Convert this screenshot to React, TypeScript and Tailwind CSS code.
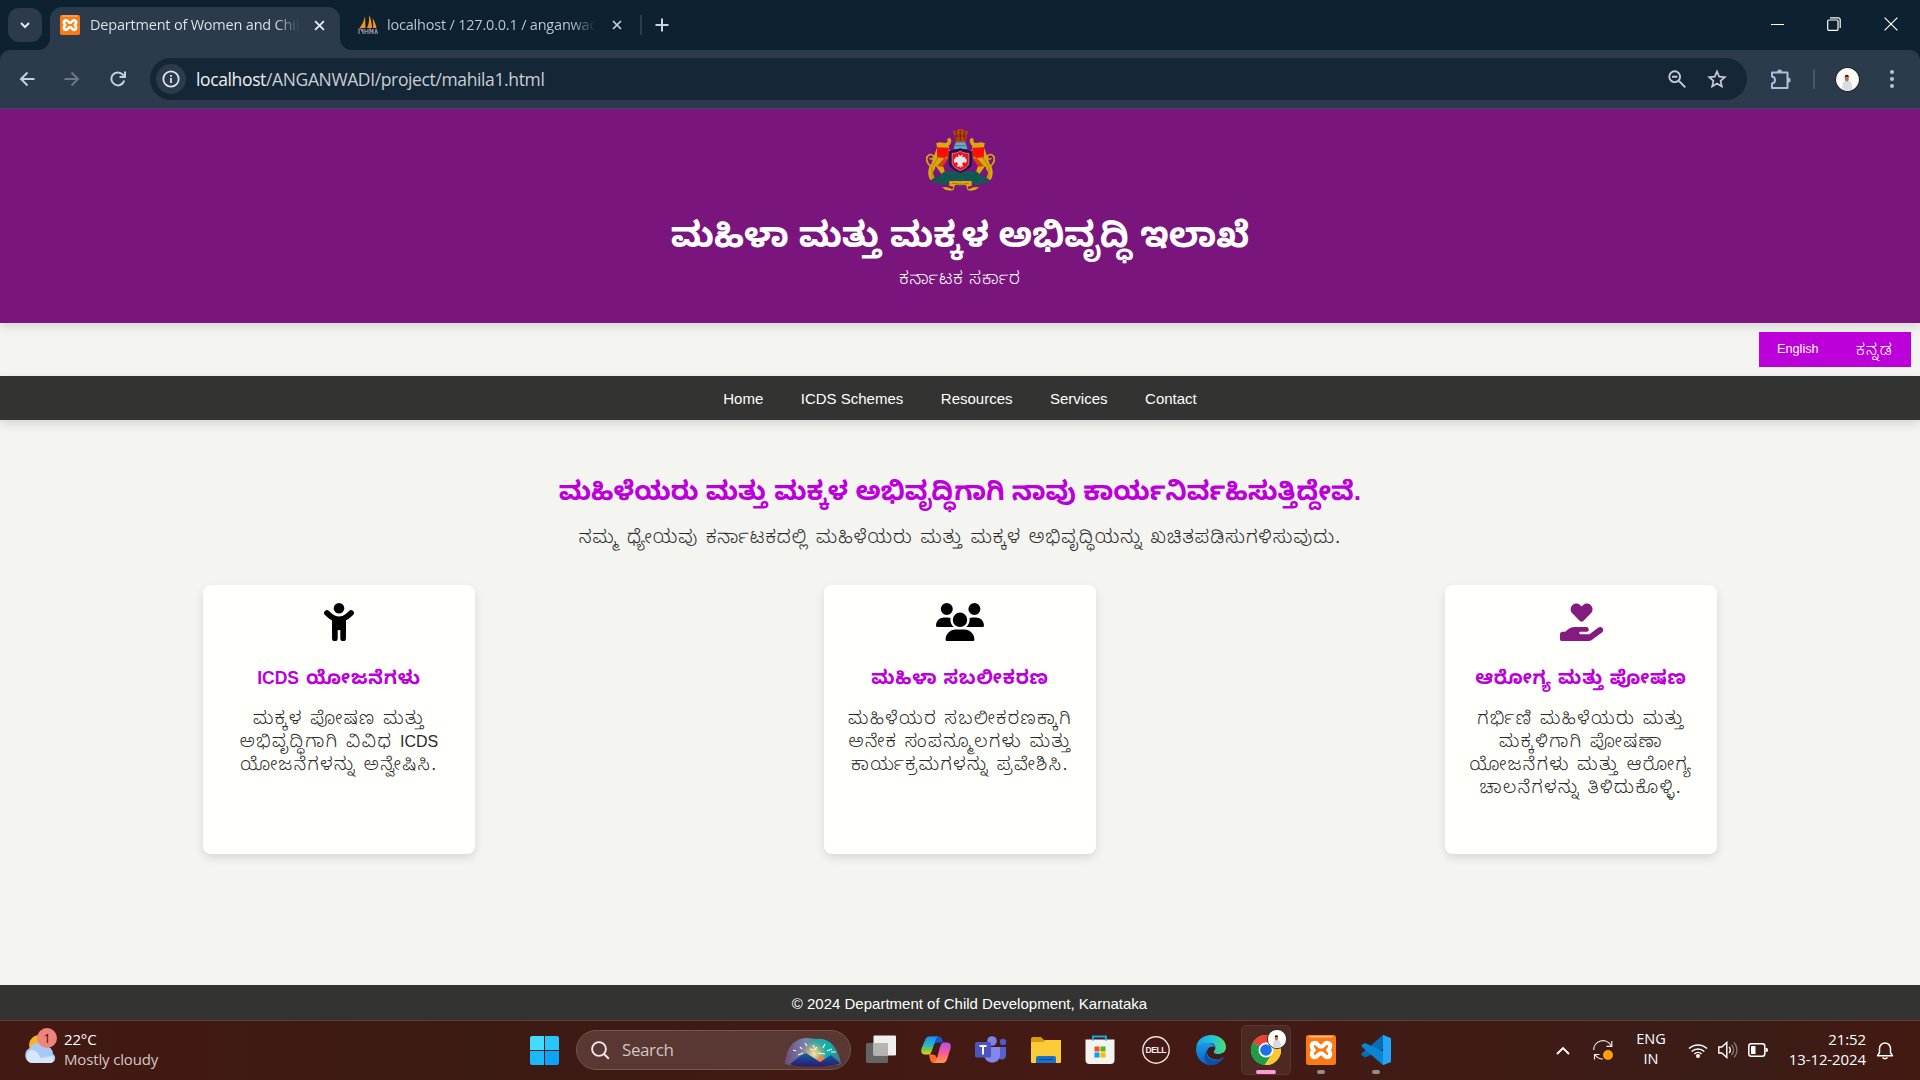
import React from "react";
import { FaUsers, FaHandHoldingHeart } from "react-icons/fa6";

const ui = "font-['Open_Sans','Noto_Sans',sans-serif]";

function Xampp({ className }: { className: string }) {
  return (
    <svg viewBox="0 0 30 30" className={className}>
      <rect width="30" height="30" rx="2.5" fill="#fb7a12" />
      <rect x="3" y="0.8" width="24" height="1.6" rx="0.8" fill="#ffb884" />
      <path
        d="M15 11.600c-1.800 0-2.400-.8-3.400-2.200C9.800 7 5.800 7.600 5.800 11c0 2 .8 3 2 4-1.200 1-2 2-2 4 0 3.400 4 4 5.800 1.600 1-1.400 1.600-2.200 3.400-2.200s2.400.8 3.400 2.200C20.200 23 24.200 22.400 24.200 19c0-2-.8-3-2-4 1.200-1 2-2 2-4 0-3.400-4-4-5.800-1.600-1 1.400-1.600 2.200-3.400 2.200z"
        fill="none"
        stroke="#fff"
        strokeWidth="4.200"
        strokeLinejoin="round"
      />
    </svg>
  );
}

function Sails() {
  return (
    <svg viewBox="0 0 20 20" className="h-5 w-5 shrink-0">
      <path d="M7 1 7.500 13H1.500C4 10 6 6 7 1zM11 0c.4 5 0 9-2 13h5C14 8 13 4 11 0zM14.500 3c2 3 3.500 7 4 10h-3.500c.3-3 .2-7-.5-10z" fill="#f7941d" />
      <path d="M1 19v-5h2l1 2 1-2v5M7 14v5M7 16.500h3M10 14v5M12 19v-5l2 3 1-3v5M17 19l1-5 1.500 5" fill="none" stroke="#8d8aa8" strokeWidth="1.200" />
    </svg>
  );
}

function Avatar({ className }: { className: string }) {
  return (
    <svg viewBox="0 0 24 24" className={className}>
      <circle cx="12" cy="12" r="11.500" fill="#fdfdfa" stroke="#1b1b1d" strokeWidth="1" />
      <path d="M7 21c0-6 1-8 4.500-8s5 2 5 8c-2 2-7.500 2-9.500 0z" fill="#d8dce6" />
      <ellipse cx="11.300" cy="11" rx="1.900" ry="2.800" fill="#c9713f" />
      <path d="M9.300 9.800c0-3 4-3 4 0-1-.8-3-.8-4 0z" fill="#1f1512" />
    </svg>
  );
}

function CloseX({ className }: { className: string }) {
  return (
    <svg viewBox="0 0 10 10" className={className}>
      <path d="M1 1l8 8M9 1l-8 8" fill="none" stroke="currentColor" strokeWidth="1.700" />
    </svg>
  );
}

function TabStrip() {
  return (
    <div className="flex h-[50px] items-start bg-[#0e2130]">
      <div className="ml-2 mt-2 flex h-[34px] w-[34px] items-center justify-center rounded-[11px] bg-[#2b3b4b]">
        <svg viewBox="0 0 12 12" className="h-3 w-3">
          <path d="M2 4l4 4 4-4" fill="none" stroke="#e3e8ee" strokeWidth="2" />
        </svg>
      </div>
      <svg viewBox="0 0 12 12" className="mt-[38px] -ml-1 h-3 w-3 shrink-0">
        <path d="M12 0v12H0A12 12 0 0 0 12 0z" fill="#2b3b4b" />
      </svg>
      <div className="mt-[7px] flex h-[43px] w-[290px] shrink-0 items-center rounded-t-[12px] bg-[#2b3b4b] pb-[7px]">
        <Xampp className="ml-[10px] h-5 w-5 shrink-0" />
        <span className="ml-[10px] w-[210px] whitespace-nowrap bg-gradient-to-r from-[#e4e9ee] from-88% to-transparent bg-clip-text text-[14.5px] tracking-[-0.2px] text-transparent">
          Department of Women and Chil
        </span>
        <CloseX className="ml-[14px] h-[11px] w-[11px] text-[#e4e9ee]" />
      </div>
      <svg viewBox="0 0 12 12" className="mt-[38px] h-3 w-3 shrink-0">
        <path d="M0 0v12h12A12 12 0 0 1 0 0z" fill="#2b3b4b" />
      </svg>
      <div className="mt-[7px] flex h-9 items-center">
        <div className="ml-[6px] flex items-center">
          <Sails />
          <span className="ml-[9px] w-[209px] whitespace-nowrap bg-gradient-to-r from-[#c2ccd8] from-88% to-transparent bg-clip-text text-[14.5px] tracking-[-0.2px] text-transparent">
            localhost / 127.0.0.1 / anganwad
          </span>
          <CloseX className="ml-[16px] h-[10px] w-[10px] text-[#c6d2e0]" />
        </div>
        <div className="ml-[18px] h-5 w-[2px] bg-[#2b3b4b]" />
        <svg viewBox="0 0 14 14" className="ml-[13px] h-[14px] w-[14px]">
          <path d="M7 0.500v13M0.500 7h13" stroke="#cbd5e1" strokeWidth="2" />
        </svg>
      </div>
      <div className="ml-auto mt-[17px] mr-[22px] flex items-center gap-[43px] text-white">
        <div className="h-px w-[13px] bg-white" />
        <svg viewBox="0 0 14 14" className="h-[14px] w-[14px]">
          <rect x="0.700" y="3" width="10.300" height="10.300" rx="1" fill="none" stroke="#fff" strokeWidth="1.200" />
          <path d="M3 .9h8.200a2 2 0 0 1 2 2V11" fill="none" stroke="#fff" strokeWidth="1.200" />
        </svg>
        <svg viewBox="0 0 14 14" className="h-[14px] w-[14px]">
          <path d="M.6.6l12.800 12.800M13.400.6.6 13.400" stroke="#fff" strokeWidth="1.200" />
        </svg>
      </div>
    </div>
  );
}

function Toolbar() {
  return (
    <div className="bg-[#0e2130]">
      <div className="flex h-[59px] items-center rounded-t-[10px] border-b border-[#46495a] bg-[#2b3b4b]">
        <svg viewBox="0 0 16 16" className="ml-[19px] h-4 w-4">
          <path d="M15.500 8H2M8.500 1.500 2 8l6.500 6.500" fill="none" stroke="#c3d0e2" strokeWidth="2" />
        </svg>
        <svg viewBox="0 0 16 16" className="ml-[29px] h-4 w-4">
          <path d="M.5 8H14M7.500 1.500 14 8l-6.500 6.500" fill="none" stroke="#6c7885" strokeWidth="2" />
        </svg>
        <svg viewBox="0 0 16 16" className="ml-[30px] h-4 w-4">
          <path d="M14.200 9.500A6.500 6.500 0 1 1 12.800 3.600l1.700 1.800M15 .5V6H9.500" fill="none" stroke="#c3d0e2" strokeWidth="2" />
        </svg>
        <div className="ml-[24px] flex h-[42px] w-[1597px] items-center rounded-full bg-[#152736]">
          <div className="ml-[6px] flex h-[30px] w-[30px] items-center justify-center rounded-full bg-[#2b3b4b]">
            <svg viewBox="0 0 18 18" className="h-[18px] w-[18px]">
              <circle cx="9" cy="9" r="7.700" fill="none" stroke="#e1e3ea" strokeWidth="1.800" />
              <path d="M9 8v5M9 5v1.800" stroke="#e1e3ea" strokeWidth="1.800" />
            </svg>
          </div>
          <span className="ml-[10px] whitespace-nowrap text-[17.5px] tracking-[-0.37px] text-[#c9ced6]">
            <span className="text-[#eef1f4]">localhost</span>/ANGANWADI/project/mahila1.html
          </span>
          <svg viewBox="0 0 18 18" className="ml-auto h-[18px] w-[18px]">
            <circle cx="6.700" cy="6.700" r="5.400" fill="none" stroke="#c7cad3" strokeWidth="1.900" />
            <path d="M11 11l6.300 6.300M4 6.700h5.400" stroke="#c7cad3" strokeWidth="1.900" />
          </svg>
          <svg viewBox="0 0 20 20" className="ml-[21px] mr-5 h-5 w-5">
            <path d="M10 2.500l2.200 5.200 5.600.5-4.200 3.700 1.200 5.500L10 14.500l-4.800 2.900 1.200-5.500L2.200 8.200l5.600-.5z" fill="none" stroke="#c7cad3" strokeWidth="1.700" />
          </svg>
        </div>
        <svg viewBox="0 0 22 22" className="ml-[23px] h-[22px] w-[22px]">
          <path d="M2 4.500h15.500V20H2v-4.500c4-.5 4-6.500 0-7z" fill="none" stroke="#a9bfdf" strokeWidth="2" strokeLinejoin="round" />
          <path d="M7 4a2.600 2.600 0 0 1 5.200 0zM18 9.500a2.600 2.600 0 0 1 0 5.200z" fill="#a9bfdf" />
        </svg>
        <div className="ml-[21px] h-5 w-[2px] bg-[#45566a]" />
        <Avatar className="ml-5 h-[25px] w-[25px]" />
        <div className="ml-[30px] flex flex-col gap-[3px]">
          <i className="h-1 w-1 rounded-full bg-[#b4c6df]" />
          <i className="h-1 w-1 rounded-full bg-[#b4c6df]" />
          <i className="h-1 w-1 rounded-full bg-[#b4c6df]" />
        </div>
      </div>
    </div>
  );
}

function EmblemSide() {
  return (
    <g>
      <path d="M722 178C704 165 698 146 706 137c7-7 16-1 13 7-2 5-8 4-8 0" fill="none" stroke="#d9a80a" strokeWidth="4.500" />
      <path d="M728 112l-2-12 8-3 14 2c6-1 7-6 5-12l6-4 4 6c0 9-3 14-6 18v10l8 12 4 20-8-2-6-16-2 17-12 14 6 22-8 8-14-24-7 20 4 18-10 4c-8-14-7-36 2-49z" fill="#d9a80a" />
      <path d="M728 112l28 1 1 10 3 12-14 9-18-2z" fill="#fb0d0a" />
      <path d="M728 168l18-24 9 3-14 24z" fill="#e23a0b" />
      <path d="M731 142l-14 26M742 150l-10 20M752 122l8 30M716 170v34" stroke="#8e6410" strokeWidth="1.500" fill="none" />
      <path d="M716 206c8-4 14-2 18-8 6-8 16-16 30-14l22 4v25l-24-3-14 16-16-8-14 2z" fill="#0b5f50" />
      <path d="M720 212l14-8 12 10 10-14 14 6 10-12M745 194l14 4 20-8" fill="none" stroke="#3d2a63" strokeWidth="2" strokeDasharray="3 2" />
      <path d="M786 213h-28v14l10 3-2 8-12-6-14-1 8 8 12 3 8-1 4-16 14 1z" fill="#d9a80a" />
    </g>
  );
}

function Emblem() {
  return (
    <svg viewBox="701 57 169 186" preserveAspectRatio="none" className="h-[62px] w-[69px]">
      <EmblemSide />
      <g transform="matrix(-1 0 0 1 1571 0)">
        <EmblemSide />
      </g>
      <path d="M767 62l8 1 5-6h11l5 6 8-1-3 16-4 19h-23l-3-19z" fill="#b8430f" />
      <path d="M775 64v26M785 60v32M795 64v26M771 78h28" stroke="#6f2410" strokeWidth="2.500" />
      <path d="M774 97h23l3 9 2 11h-33l2-11z" fill="#62aebf" />
      <path d="M771 107h29" stroke="#2e6d86" strokeWidth="2" />
      <path d="M757 124l28-9 29 9v36c0 14-16 22-29 29-12-7-28-15-28-29z" fill="#2a0f4c" />
      <path d="M765 130c8 0 14-2 20-7 6 5 13 7 21 7v28c0 10-10 18-21 24-10-6-20-14-20-24z" fill="#f01018" stroke="#f3c9d4" strokeWidth="1.500" />
      <path d="M780 133l5 5 6-5-1 9 5-2 6 10-2 10-7-4-2 7 3 8-7-2-1 6-2-6-7 2 3-8-2-7-6 4-2-10 6-10 5 2z" fill="#e6e6ea" />
      <path d="M766 219q20 7 40 0" fill="none" stroke="#6b4a10" strokeWidth="2.500" strokeDasharray="3 1.500" />
    </svg>
  );
}

function ChildIcon() {
  return (
    <svg viewBox="0 0 90 116" className="h-[38.4px] w-[30px]">
      <circle cx="45" cy="16" r="16" />
      <path d="M8.500 30.500Q20 42 31 47q14 4 28 0 11-5 22.500-16.500" fill="none" stroke="#000" strokeWidth="17" strokeLinecap="round" />
      <path d="M24 46h42v36H24z" />
      <path d="M32.500 60v47M57.500 60v47" stroke="#000" strokeWidth="17" strokeLinecap="round" />
    </svg>
  );
}

const cards = [
  {
    icon: <ChildIcon />,
    title: (
      <>
        <span className="mr-[7px] text-[17.5px] tracking-normal">ICDS</span>ಯೋಜನೆಗಳು
      </>
    ),
    lines: [
      "ಮಕ್ಕಳ ಪೋಷಣ ಮತ್ತು",
      <>
        ಅಭಿವೃದ್ಧಿಗಾಗಿ ವಿವಿಧ <span className="text-[16px] tracking-normal">ICDS</span>
      </>,
      "ಯೋಜನೆಗಳನ್ನು ಅನ್ವೇಷಿಸಿ.",
    ],
  },
  {
    icon: <FaUsers className="h-[38.4px] w-[48px] text-black" />,
    title: "ಮಹಿಳಾ ಸಬಲೀಕರಣ",
    lines: ["ಮಹಿಳೆಯರ ಸಬಲೀಕರಣಕ್ಕಾಗಿ", "ಅನೇಕ ಸಂಪನ್ಮೂಲಗಳು ಮತ್ತು", "ಕಾರ್ಯಕ್ರಮಗಳನ್ನು ಪ್ರವೇಶಿಸಿ."],
  },
  {
    icon: <FaHandHoldingHeart className="ml-[2px] h-[38.4px] w-[43.2px] text-[#851a80]" />,
    title: "ಆರೋಗ್ಯ ಮತ್ತು ಪೋಷಣ",
    lines: ["ಗರ್ಭಿಣಿ ಮಹಿಳೆಯರು ಮತ್ತು", "ಮಕ್ಕಳಿಗಾಗಿ ಪೋಷಣಾ", "ಯೋಜನೆಗಳು ಮತ್ತು ಆರೋಗ್ಯ", "ಚಾಲನೆಗಳನ್ನು ತಿಳಿದುಕೊಳ್ಳಿ."],
  },
];

function Page() {
  return (
    <div className="flex h-[911px] flex-col whitespace-nowrap bg-[#f4f4f0] font-['Liberation_Sans','Noto_Sans_Kannada',Arial,sans-serif]">
      <header className="flex h-[214px] shrink-0 flex-col items-center bg-[#7a157e] pt-5 text-white shadow-[0_4px_10px_rgba(0,0,0,0.12)]">
        <Emblem />
        <h1 className="mt-[23px] flex h-[42px] items-center text-[35.2px] font-bold">ಮಹಿಳಾ ಮತ್ತು ಮಕ್ಕಳ ಅಭಿವೃದ್ಧಿ ಇಲಾಖೆ</h1>
        <p className="mt-[13px] flex h-5 items-center text-[17px] font-light tracking-[1px]">ಕರ್ನಾಟಕ ಸರ್ಕಾರ</p>
      </header>
      <div className="flex h-[53px] shrink-0 justify-end pr-[9px] pt-[9px]">
        <div className="flex h-[35px] w-[152px] items-center justify-between bg-[#bb00d9] pl-[18px] pr-[18px] pt-px text-white">
          <span className="text-[12.7px]">English</span>
          <span className="text-[16px] font-light tracking-[1.3px]">ಕನ್ನಡ</span>
        </div>
      </div>
      <nav className="flex h-11 shrink-0 items-center justify-center gap-[37.5px] bg-[#333331] pt-[3px] text-[15px] text-white shadow-[0_4px_10px_rgba(0,0,0,0.12)]">
        <span>Home</span>
        <span>ICDS Schemes</span>
        <span>Resources</span>
        <span>Services</span>
        <span>Contact</span>
      </nav>
      <main className="flex flex-1 flex-col">
        <h2 className="mt-[56px] flex h-8 items-center justify-center text-[26.35px] font-bold text-[#bb00d9]">
          ಮಹಿಳೆಯರು ಮತ್ತು ಮಕ್ಕಳ ಅಭಿವೃದ್ಧಿಗಾಗಿ ನಾವು ಕಾರ್ಯನಿರ್ವಹಿಸುತ್ತಿದ್ದೇವೆ.
        </h2>
        <p className="mt-[17px] flex h-6 items-center justify-center text-[18.7px] font-light tracking-[1.05px] [word-spacing:1.5px] text-[#2b2b2b]">
          ನಮ್ಮ ಧ್ಯೇಯವು ಕರ್ನಾಟಕದಲ್ಲಿ ಮಹಿಳೆಯರು ಮತ್ತು ಮಕ್ಕಳ ಅಭಿವೃದ್ಧಿಯನ್ನು ಖಚಿತಪಡಿಸುಗಳಿಸುವುದು.
        </p>
        <div className="mt-9 flex justify-between px-[203px]">
          {cards.map((c, i) => (
            <section key={i} className="flex h-[269px] w-[272px] flex-col items-center rounded-[8px] bg-[#fffffc] pt-[18px] shadow-[0_4px_10px_rgba(0,0,0,0.11)]">
              {c.icon}
              <h3 className="mt-[25px] flex h-6 items-center text-[19px] font-bold tracking-[0.8px] text-[#bb00d9]">{c.title}</h3>
              <div className="mt-[17px] text-center text-[18px] font-light leading-[23px] tracking-[1.5px] [word-spacing:1px] text-[#2b2b2b]">
                {c.lines.map((l, j) => (
                  <p key={j} className="h-[23px]">{l}</p>
                ))}
              </div>
            </section>
          ))}
        </div>
      </main>
      <footer className="flex h-[35px] shrink-0 items-center justify-center bg-[#333331] pl-[19px] pt-[3px] text-[15px] text-white">
        © 2024 Department of Child Development, Karnataka
      </footer>
    </div>
  );
}

function WeatherIcon() {
  return (
    <svg viewBox="0 0 36 38" className="h-[38px] w-9">
      <circle cx="17" cy="17" r="10" fill="#f8b322" />
      <path d="M9 35a8 8 0 0 1-1-15 9 9 0 0 1 15-2 8 8 0 0 1 8 8 5 5 0 0 1-2 9z" fill="#a9c9f5" />
      <path d="M9 35a7 7 0 0 1 0-13c5 0 8 3 9 8l13-2a5 5 0 0 1-2 7z" fill="#d6e6fc" />
      <circle cx="25" cy="10" r="10" fill="#f0837c" />
      <text x="25" y="14.500" textAnchor="middle" fontSize="12.500" fill="#2a1210">1</text>
    </svg>
  );
}

function SearchArt() {
  return (
    <svg viewBox="0 0 58 30" className="h-[30px] w-[58px]">
      <defs>
        <linearGradient id="sky" x1="0" x2="1">
          <stop offset="0" stopColor="#6a4f78" />
          <stop offset=".35" stopColor="#7a7fae" />
          <stop offset=".55" stopColor="#2aa7a4" />
          <stop offset=".8" stopColor="#0ab0b0" />
          <stop offset="1" stopColor="#5b6a78" />
        </linearGradient>
        <radialGradient id="glow">
          <stop offset="0" stopColor="#ffe6a0" />
          <stop offset="1" stopColor="#ffb04000" />
        </radialGradient>
        <linearGradient id="hill" x2="0" y2="1">
          <stop offset="0" stopColor="#0d63ad" />
          <stop offset="1" stopColor="#2c1a6c" />
        </linearGradient>
      </defs>
      <path d="M1 27C2 9 12 1 23 1c4 0 6 1 9 1 14-2 23 10 25 25-1 2-54 2-56 0z" fill="url(#sky)" />
      <circle cx="30" cy="17" r="13" fill="url(#glow)" />
      <path d="M30 26l7-8 6 6z" fill="#ff7a45" />
      <path d="M6 27l10-8 6-3 14 9 11-7 9 8c-2 4-46 5-50 1z" fill="url(#hill)" />
      <path d="M9 13l3 1M16 10l2 2M21 6l2 3M14 18l5-2M29 8l3 5M33 10l-2 3M41 7l-2 4M48 12l-5 2M52 15l-5 0M34 16l7 1M26 12l4 1" stroke="#fff8e0" strokeWidth="1.200" />
    </svg>
  );
}

function TaskView() {
  return (
    <svg viewBox="0 0 30 30" className="h-[30px] w-[30px]">
      <rect y="8" width="22" height="20" rx="1.500" fill="#646464" />
      <rect x="7.500" y=".5" width="22.500" height="20" rx="1" fill="#efefed" />
      <rect x="7.500" y="8" width="14.500" height="12.500" fill="#b5b4b3" />
    </svg>
  );
}

function Copilot() {
  return (
    <svg viewBox="0 0 30 30" className="h-[30px] w-[30px]">
      <defs>
        <linearGradient id="cpa" x2="0" y2="1">
          <stop offset="0" stopColor="#1b8df5" />
          <stop offset=".45" stopColor="#21b7c9" />
          <stop offset=".75" stopColor="#7fc93b" />
          <stop offset="1" stopColor="#f5cf1e" />
        </linearGradient>
        <linearGradient id="cpb" x2="0" y2="1">
          <stop offset="0" stopColor="#b34ff0" />
          <stop offset=".5" stopColor="#f9589b" />
          <stop offset="1" stopColor="#ff9a3d" />
        </linearGradient>
      </defs>
      <path d="M17 1.500c3 0 4 1 5 6h-6c-1 0-2 1-2 2L10 1.500z" fill="#1656cf" />
      <path d="M8 19l6 1 5 8h-6c-3 0-4-2-5-9z" fill="#ff6a2b" />
      <path d="M9 1.500h9c-2 0-3 2-4 5l-3 9c-1 2.500-2 4-4 4H4c-3 0-4.500-2-3.500-6l3-7c1-3 2-5 5.500-5z" fill="url(#cpa)" />
      <path d="M21 28h-9c2 0 3-2 4-5l3-11c1-3 2-4.500 4-4.500h3c3 0 4.500 2 3.500 6L26.500 23c-1 3-2 5-5.500 5z" fill="url(#cpb)" />
    </svg>
  );
}

function Teams() {
  return (
    <svg viewBox="0 0 32 30" className="h-[30px] w-8">
      <circle cx="28" cy="7" r="3.200" fill="#5059c9" />
      <path d="M22 12h9v8c0 6-8 6-8 0z" fill="#5d5fcf" />
      <circle cx="17" cy="6" r="4.800" fill="#7b83eb" />
      <path d="M9 12h16v8c0 10-15 10-16 0z" fill="#8287ec" />
      <rect y="7" width="16" height="15.500" rx="1.500" fill="#4b53bc" />
      <path d="M4.500 11h7M8 11v8.500" stroke="#fff" strokeWidth="1.900" />
    </svg>
  );
}

function Folder() {
  return (
    <svg viewBox="0 0 30 28" className="h-7 w-[30px]">
      <path d="M0 3q0-2 2-2h8l3 3h17v6H0z" fill="#d99a10" />
      <path d="M0 6h12l3-2h15v22q0 1-1 1H1q-1 0-1-1z" fill="#fbcb38" />
      <path d="M5 27v-5q0-2 2-2h16q2 0 2 2v5z" fill="#1673c9" />
      <path d="M8 23.500h14" stroke="#0b4f92" strokeWidth="1.200" />
    </svg>
  );
}

function Store() {
  return (
    <svg viewBox="0 0 30 30" className="h-[30px] w-[30px]">
      <path d="M8 6V1.500h13V6" fill="none" stroke="#1ba3ea" strokeWidth="2" />
      <path d="M.5 4.500h29V25q0 4-4 4h-21q-4 0-4-4z" fill="#f3f3f1" />
      <path d="M8 5.500V2M21 5.500V2" stroke="#1ba3ea" strokeWidth="2" />
      <rect x="9.500" y="11.500" width="5" height="5" fill="#f25022" />
      <rect x="15.500" y="11.500" width="5" height="5" fill="#5bb50a" />
      <rect x="9.500" y="17.500" width="5" height="5" fill="#0a9ff0" />
      <rect x="15.500" y="17.500" width="5" height="5" fill="#ffb900" />
    </svg>
  );
}

function Dell() {
  return (
    <svg viewBox="0 0 28 28" className="h-7 w-7">
      <circle cx="14" cy="14" r="13.200" fill="none" stroke="#eee4e1" strokeWidth="1.400" />
      <text x="14" y="17.200" textAnchor="middle" fontSize="8.500" fontWeight="700" textLength="21" fill="#f5eeec" fontFamily="Liberation Sans">
        DELL
      </text>
    </svg>
  );
}

function Edge() {
  return (
    <svg viewBox="0 0 30 30" className="h-[30px] w-[30px]">
      <defs>
        <linearGradient id="eda" x1="0" x2="1">
          <stop offset="0" stopColor="#1aa0e6" />
          <stop offset=".55" stopColor="#22c3d6" />
          <stop offset="1" stopColor="#4fe06a" />
        </linearGradient>
        <linearGradient id="edb" x2="0" y2="1">
          <stop offset="0" stopColor="#1b9be8" />
          <stop offset="1" stopColor="#0a62c4" />
        </linearGradient>
      </defs>
      <path d="M0 13C1 5 7 0 15 0c9 0 15 6 15 12 0 5-4 7-8 7-3 0-5-1-4-3 3-3 1-8-4-8C8 8 3 9 0 13z" fill="url(#eda)" />
      <path d="M0 14C2 9 7 7 12 8c4 0 6 2 7 4-5-2-8 2-8 5 0 5 6 9 13 7l4-2c-3 5-8 8-13 8C6 30 0 23 0 14z" fill="url(#edb)" />
      <path d="M11 15c-2 7 4 12 12 10l5-3c-3 5-8 8-13 8-6 0-9-9-4-15z" fill="#0d4fa8" />
    </svg>
  );
}

function Chrome() {
  return (
    <svg viewBox="0 0 30 30" className="h-[30px] w-[30px]">
      <circle cx="15" cy="15" r="15" fill="#fcc934" />
      <path d="M15 15 2 7.500A15 15 0 0 1 28 7.500H15z" fill="#ea4335" />
      <path d="M15 15 21 19l-7.500 11A15 15 0 0 1 2 7.500z" fill="#1e9e4a" />
      <path d="M15 7.500h13A15 15 0 0 1 14 30l7.500-11z" fill="#fcc934" />
      <circle cx="15" cy="15" r="7.500" fill="#fff" />
      <circle cx="15" cy="15" r="5.800" fill="#1a73e8" />
    </svg>
  );
}

function VsCode() {
  return (
    <svg viewBox="0 0 30 30" className="h-[30px] w-[30px]">
      <path d="M22 0 30 3v7L4 22.500 .5 20v-1.500z" fill="#0a6dba" />
      <path d="M22 30l8-3v-7L4 8 .5 10v1.500z" fill="#0b84d4" />
      <path d="M22 0l6.500 2.500Q30 3 30 4.500v21q0 1.500-1.500 2L22 30z" fill="#23a6f5" />
    </svg>
  );
}

function Taskbar() {
  return (
    <div className={`flex h-[60px] items-center border-t border-[#5e3d38] bg-[linear-gradient(90deg,#431913,#3c1a14_25%,#451a14_55%,#3f1b16_80%,#3a1d17_90%,#431912)] pb-px text-white ${ui}`}>
      <div className="flex w-[530px] items-center pl-[22px]">
        <div className="-mt-[6px]"><WeatherIcon /></div>
        <div className="-mt-[2px] ml-[6px] text-[15px] leading-5 tracking-[-0.15px]">
          <div>22°C</div>
          <div className="text-[#d5c8c5]">Mostly cloudy</div>
        </div>
      </div>
      <div className="grid h-[29px] w-[29px] shrink-0 grid-cols-2 gap-px">
        <i className="rounded-tl-[2px] bg-[#43dcff]" />
        <i className="rounded-tr-[2px] bg-[#27c6fd]" />
        <i className="rounded-bl-[2px] bg-[#1bb9fc]" />
        <i className="rounded-br-[2px] bg-[#0aa4f8]" />
      </div>
      <div className="ml-[17px] flex h-10 w-[275px] shrink-0 items-center rounded-full border border-[#75544e] bg-[#593732]">
        <svg viewBox="0 0 19 19" className="ml-[14px] h-[19px] w-[19px]">
          <circle cx="8" cy="8" r="6.900" fill="none" stroke="#f1eae8" strokeWidth="1.900" />
          <path d="M12.800 12.800l5 5" stroke="#f1eae8" strokeWidth="2" />
        </svg>
        <span className="ml-3 text-[17px] tracking-[-0.4px] text-[#d3c5c2]">Search</span>
        <div className="ml-auto mr-2 mt-1"><SearchArt /></div>
      </div>
      <div className="ml-[15px] flex items-center">
        <TaskView />
        <div className="ml-[25px]"><Copilot /></div>
        <div className="ml-[24px]"><Teams /></div>
        <div className="ml-[24px]"><Folder /></div>
        <div className="ml-[24px]"><Store /></div>
        <div className="ml-[27px]"><Dell /></div>
        <div className="ml-[26px]"><Edge /></div>
        <div className="relative ml-[15px] flex h-[50px] w-[50px] items-center justify-center rounded-[5px] border border-[#5a3630] bg-[#4c2923]">
          <Chrome />
          <Avatar className="absolute left-[25px] top-[3px] h-5 w-5" />
          <i className="absolute bottom-0 left-[14px] h-1 w-5 rounded-full bg-[#ff9bd5]" />
        </div>
        <div className="relative ml-[15px]">
          <Xampp className="h-[30px] w-[30px]" />
          <i className="absolute -bottom-[9px] left-[11px] h-1 w-2 rounded-full bg-[#9c8a87]" />
        </div>
        <div className="relative ml-[25px]">
          <VsCode />
          <i className="absolute -bottom-[9px] left-[11px] h-1 w-2 rounded-full bg-[#9c8a87]" />
        </div>
      </div>
      <div className="ml-auto flex items-center">
        <svg viewBox="0 0 14 9" className="h-[9px] w-[14px]">
          <path d="M1 8l6-6 6 6" fill="none" stroke="#fff" strokeWidth="1.900" />
        </svg>
        <svg viewBox="0 0 20 20" className="ml-[23px] h-5 w-5">
          <path d="M.7 10A9.200 9.200 0 0 1 18 5.500M18.800 1v5.300h-5.300M1.500 19.500v-5h5M2 14.500A9 9 0 0 0 10 19" fill="none" stroke="#f2eceb" strokeWidth="1.200" />
          <circle cx="15" cy="15" r="5" fill="#ff9d0a" />
        </svg>
        <div className="-mt-[2px] ml-[23px] w-[30px] text-center text-[14.500px] leading-5">
          <div>ENG</div>
          <div>IN</div>
        </div>
        <svg viewBox="0 0 20 16" className="ml-[22px] h-4 w-5">
          <path d="M1 6.500a13 13 0 0 1 18 0M3.700 9.500a9 9 0 0 1 12.600 0M6.400 12a5.300 5.300 0 0 1 7.200 0" fill="none" stroke="#fff" strokeWidth="1.500" />
          <circle cx="10" cy="14" r="2" fill="#fff" />
        </svg>
        <svg viewBox="0 0 20 18" className="ml-[10px] h-[18px] w-5">
          <path d="M.8 6v6h3l5 4.500V1.500l-5 4.500z" fill="none" stroke="#fff" strokeWidth="1.400" />
          <path d="M11 6a4 4 0 0 1 0 6" fill="none" stroke="#fff" strokeWidth="1.400" />
          <path d="M13.500 4a7 7 0 0 1 0 10M16 1.500a11 11 0 0 1 0 15" fill="none" stroke="#8e7773" strokeWidth="1.300" />
        </svg>
        <svg viewBox="0 0 20 14" className="ml-[10px] h-[14px] w-5">
          <rect x=".8" y=".8" width="16" height="12.400" rx="2.500" fill="none" stroke="#fff" strokeWidth="1.500" />
          <rect x="3" y="3" width="4.500" height="8" rx=".6" fill="#fff" />
          <path d="M17.500 5h1.200q1.300 0 1.300 2t-1.300 2h-1.200z" fill="#fff" />
        </svg>
        <div className="-mt-[2px] ml-5 w-[78px] whitespace-nowrap text-right text-[15px] leading-5 tracking-[-0.1px]">
          <div>21:52</div>
          <div>13-12-2024</div>
        </div>
        <svg viewBox="0 0 18 19" className="ml-[10px] mr-[26px] h-[19px] w-[18px]">
          <path d="M3.500 7.500a5.500 5.500 0 0 1 11 0v4l2 3.300H1.500l2-3.300zM6.500 16.500q2.500 2.500 5 0" fill="none" stroke="#fff" strokeWidth="1.500" strokeLinejoin="round" />
        </svg>
      </div>
    </div>
  );
}

export default function App() {
  return (
    <div className="flex h-[1080px] w-[1920px] flex-col overflow-hidden">
      <div className={ui}>
        <TabStrip />
        <Toolbar />
      </div>
      <Page />
      <Taskbar />
    </div>
  );
}
